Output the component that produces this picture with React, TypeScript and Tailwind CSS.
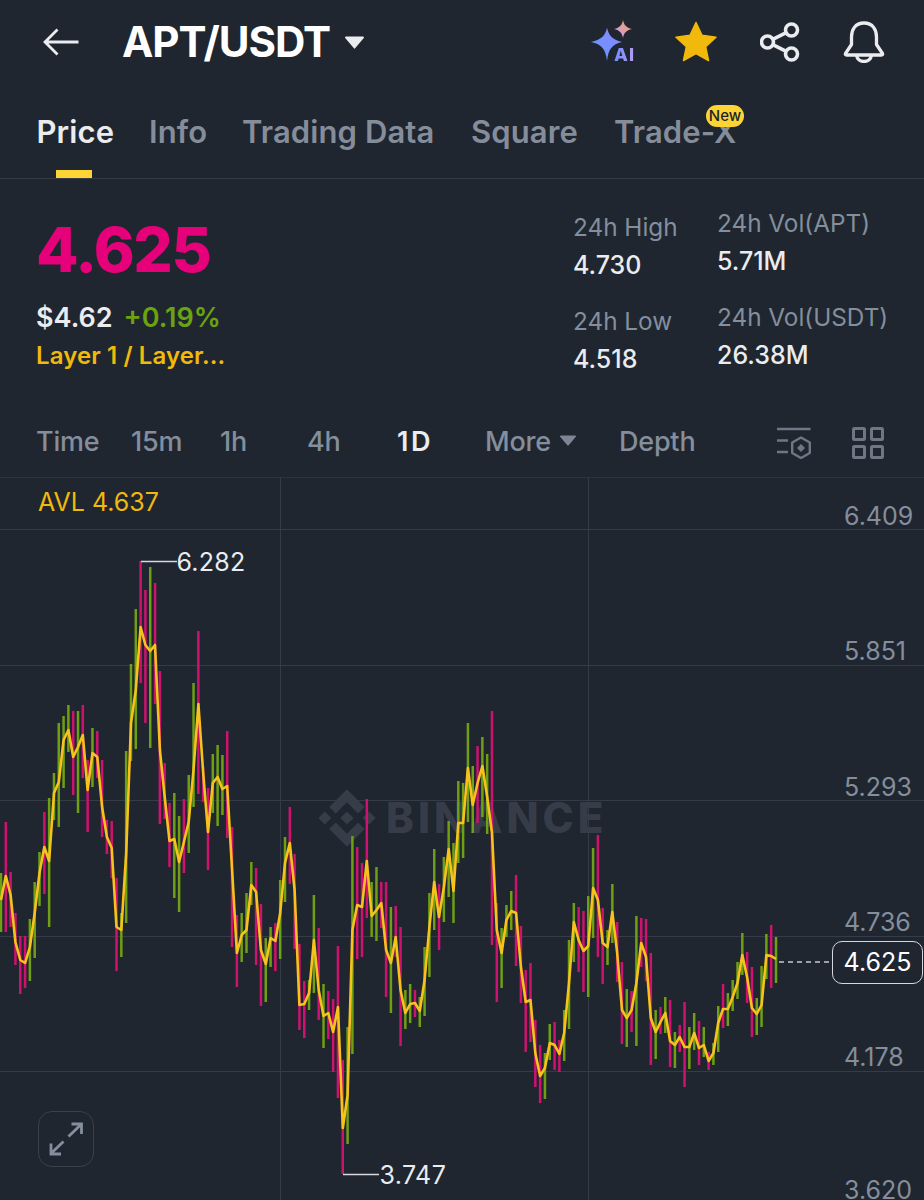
import React from "react";

type Bar = [number, number, number, number];
// colour (0 pink, 1 green), wick top, wick bottom, moving average
const bars: Bar[] = [
[1,873,932,900],[0,822,932,876],[0,872,927,895],[0,913,965,942],[0,936,994,960],[0,936,988,963],[1,919,981,947],[1,882,958,913],[1,852,906,873],[0,812,894,847],
[1,798,927,861],[1,773,820,793],[1,723,827,782],[1,716,788,740],[1,705,752,730],[0,711,795,757],[1,711,813,747],[0,705,778,735],[0,760,832,790],[1,728,787,753],
[0,731,778,757],[0,760,837,807],[0,820,854,837],[0,821,878,848],[0,878,971,927],[1,913,957,930],[1,751,923,853],[1,664,761,723],[1,609,749,690],[0,561,683,627],
[0,590,723,645],[1,567,748,651],[0,583,704,645],[0,671,824,750],[0,763,819,797],[0,803,867,841],[1,793,898,839],[1,816,912,862],[0,799,873,842],[1,775,853,822],
[1,683,807,770],[0,631,794,704],[0,767,802,773],[0,788,870,832],[1,754,813,783],[1,745,826,777],[1,755,815,789],[0,731,838,786],[0,827,947,870],[0,915,987,953],
[1,913,962,935],[1,893,953,930],[1,862,905,885],[0,868,965,892],[0,904,1006,950],[1,938,1002,964],[1,927,967,938],[0,923,971,941],[1,880,959,913],[1,837,902,863],
[0,807,884,843],[0,854,949,890],[0,944,1030,1005],[0,981,1038,1004],[1,980,1010,993],[1,895,993,940],[0,928,1020,990],[1,984,1048,1016],[0,991,1039,1013],[0,999,1072,1032],
[0,946,1098,1007],[0,1060,1174,1128],[1,1027,1144,1095],[1,836,1054,930],[0,847,959,905],[0,863,957,907],[0,799,918,861],[1,882,937,916],[1,867,941,910],[0,882,928,903],
[0,882,997,950],[1,907,1013,963],[0,906,957,937],[0,927,1046,990],[1,990,1029,1013],[1,984,1023,1004],[0,990,1017,1003],[1,997,1027,1011],[1,947,1016,980],[1,893,977,927],
[1,849,930,882],[0,884,950,917],[1,857,922,887],[1,821,897,849],[1,843,923,891],[1,781,863,823],[1,783,858,823],[1,723,822,768],[1,766,833,805],[0,746,823,783],
[1,737,817,766],[1,754,834,797],[0,711,945,833],[0,903,1002,930],[1,928,988,953],[1,905,937,920],[1,891,930,911],[0,875,966,913],[0,926,1003,967],[0,970,1052,1002],
[0,963,1042,1000],[0,1020,1087,1053],[0,1045,1103,1076],[1,1053,1099,1068],[1,1024,1060,1043],[0,1022,1070,1045],[0,1040,1072,1054],[1,1010,1061,1033],[1,940,1029,983],[1,903,962,922],
[0,907,972,940],[0,911,992,951],[1,896,997,946],[1,848,938,888],[0,835,957,900],[0,908,984,943],[1,930,965,947],[1,884,943,912],[0,922,982,952],[0,962,1044,1010],
[1,989,1047,1018],[0,991,1032,1010],[1,916,1046,983],[0,918,967,943],[0,919,981,957],[0,953,1065,1018],[1,1010,1059,1032],[0,1007,1034,1022],[1,997,1033,1013],[0,1000,1067,1041],
[1,1032,1068,1045],[0,1025,1052,1037],[0,1002,1087,1047],[1,1027,1069,1047],[1,1013,1050,1033],[0,1021,1065,1048],[1,1027,1057,1045],[0,1052,1070,1061],[1,1043,1065,1053],[1,1006,1052,1023],
[0,984,1028,1009],[1,993,1026,1009],[1,980,1011,997],[1,962,999,983],[1,933,975,955],[0,952,1003,977],[0,967,1037,1008],[1,998,1035,1014],[1,966,1027,1005],[1,934,979,955],
[0,925,988,956],[1,937,983,959],
];
const xOf = (i: number) => 1 + (i * 775) / 161;
const maPoints = bars.map((b, i) => `${xOf(i).toFixed(1)},${b[3]}`).join(" ");

const FONT = "font-['Inter','Liberation_Sans',sans-serif]";

function Caret({ className }: { className: string }) {
  return (
    <svg viewBox="0 0 20 13" className={className} fill="currentColor">
      <path d="M1.5 0.5h17a1 1 0 0 1 .8 1.6l-8.500 10a1 1 0 0 1-1.600 0l-8.500-10a1 1 0 0 1 .8-1.600z" />
    </svg>
  );
}

function AiIcon() {
  return (
    <div className="relative h-[44px] w-[46px]">
      <svg viewBox="0 0 46 44" className="h-[44px] w-[46px]">
        <defs>
          <linearGradient id="sp1" x1="0" y1="1" x2="1" y2="0">
            <stop offset="0" stopColor="#5f9bff" />
            <stop offset="1" stopColor="#8f83ff" />
          </linearGradient>
          <linearGradient id="sp2" x1="0" y1="1" x2="1" y2="0">
            <stop offset="0" stopColor="#c79aee" />
            <stop offset="1" stopColor="#f5a35f" />
          </linearGradient>
        </defs>
        <path d="M16 7.500C17.500 15 21 19.500 31 22 21 24.500 17.500 29 16 41 14.500 29 11 24.500 0 22 11 19.500 14.500 15 16 7.500Z" fill="url(#sp1)" />
        <path d="M32 0C33 5 35 7.500 41 9 35 10.500 33 13 32 18 31 13 29 10.500 23 9 29 7.500 31 5 32 0Z" fill="url(#sp2)" />
      </svg>
      <span className="absolute left-[23px] top-[25px] bg-gradient-to-r from-[#6e8cff] to-[#b79cf0] bg-clip-text text-[18px] leading-[19px] font-extrabold tracking-[1px] text-transparent">
        AI
      </span>
    </div>
  );
}

function StarIcon() {
  return (
    <svg viewBox="0 0 42 41" className="h-[41px] w-[42px]">
      <path
        d="M21 1.500 27 14.300 41 16.200 30.700 25.800 33.500 39.500 21 32.700 8.500 39.500 11.300 25.800 1 16.200 15 14.300Z"
        fill="#f0b90b"
        stroke="#f0b90b"
        strokeWidth="1.500"
        strokeLinejoin="round"
      />
    </svg>
  );
}

function ShareIcon() {
  return (
    <svg viewBox="0 0 40 40" className="h-[40px] w-[40px]" fill="none" stroke="#eaecef" strokeWidth="3.600">
      <circle cx="31.500" cy="8" r="6" />
      <circle cx="7.500" cy="20" r="6" />
      <circle cx="31.500" cy="32" r="6" />
      <path d="M12.800 17.300 26.200 10.700M12.800 22.700 26.200 29.300" />
    </svg>
  );
}

function BellIcon() {
  return (
    <svg viewBox="0 0 42 42" className="h-[42px] w-[42px]" fill="none" stroke="#eaecef" strokeWidth="3.300" strokeLinejoin="round">
      <path d="M21 2C12 2 8.500 9 8.500 16V23.500L2.500 32.500C2 33.500 2.500 34 3.500 34H38.500C39.500 34 40 33.500 39.500 32.500L33.500 23.500V16C33.500 9 30 2 21 2Z" />
      <path d="M13.500 34C14 38 17 40.500 21 40.500S28 38 28.500 34" />
    </svg>
  );
}

function SettingsIcon() {
  return (
    <svg viewBox="0 0 35 32" className="h-[32px] w-[35px]" fill="none" stroke="#6f7785" strokeWidth="2.400">
      <path d="M1 2H34.500M1 13.500H12M1 25H12" />
      <path d="M25 10.500 33.800 15.500V26L25 31 16.200 26V15.500Z" strokeLinejoin="round" />
      <path d="M25 17 29 21 25 25 21 21Z" fill="#6f7785" stroke="none" />
    </svg>
  );
}

function GridIcon() {
  return (
    <svg viewBox="0 0 32 32" className="h-[32px] w-[32px]" fill="none" stroke="#6f7785" strokeWidth="3">
      <rect x="1.500" y="1.500" width="11" height="11" rx="1" />
      <rect x="19.500" y="1.500" width="11" height="11" rx="1" />
      <rect x="1.500" y="19.500" width="11" height="11" rx="1" />
      <rect x="19.500" y="19.500" width="11" height="11" rx="1" />
    </svg>
  );
}

function Stat({ label, value }: { label: string; value: string }) {
  return (
    <div className="flex flex-col">
      <span className="text-[24.3px] leading-[30px] text-[#848e9c]">{label}</span>
      <span className="mt-[8px] text-[25px] leading-[30px] font-medium text-[#eaecef]">{value}</span>
    </div>
  );
}

export default function App() {
  return (
    <div className={`h-[1200px] w-[924px] overflow-hidden bg-[#1f2630] ${FONT}`}>
      {/* Header */}
      <header className="flex h-[82px] items-center pt-[1px]">
        <svg viewBox="0 0 36 28" className="ml-[43px] h-[28px] w-[36px]" fill="none" stroke="#eaecef" strokeWidth="2.800">
          <path d="M35.500 14H2M14.500 1.500 2 14 14.500 26.500" />
        </svg>
        <h1 className="ml-[43px] text-[42px] leading-[48px] font-bold tracking-[-1px] text-white">APT/USDT</h1>
        <Caret className="ml-[14px] mt-[1px] h-[13px] w-[21px] text-[#eaecef]" />
        <div className="ml-[226px] flex items-center">
          <AiIcon />
          <div className="ml-[38px]"><StarIcon /></div>
          <div className="ml-[43px]"><ShareIcon /></div>
          <div className="ml-[43px]"><BellIcon /></div>
        </div>
      </header>

      {/* Tabs */}
      <nav className="flex h-[97px] items-start border-b border-[#363c47] pl-[36.500px] pt-[29px] text-[31px] leading-[42px] font-semibold tracking-[0.1px] text-[#868d9a]">
        <div className="relative w-[112.500px] text-[#eaecef]">
          Price
          <span className="absolute left-[19.500px] top-[59px] h-[8px] w-[36px] bg-[#fcd535]" />
        </div>
        <div className="w-[93px]">Info</div>
        <div className="w-[229px]">Trading Data</div>
        <div className="w-[143px]">Square</div>
        <div className="relative">
          Trade-X
          <span className="absolute left-[92px] top-[-6px] flex h-[22px] w-[38px] items-center justify-center rounded-[11px] bg-[#fcd535] text-[15px] leading-[18px] font-medium tracking-normal text-[#1e2329]">
            New
          </span>
        </div>
      </nav>

      {/* Price summary */}
      <section className="flex h-[222px] pl-[36px]">
        <div className="w-[537px] pt-[33px]">
          <div className="text-[62px] leading-[76px] font-extrabold tracking-[-1.400px] text-[#e6007a]">4.625</div>
          <div className="mt-[14px] flex items-center text-[27px] leading-[32px] font-semibold">
            <span className="text-[#eaecef]">$4.62</span>
            <span className="ml-[11px] text-[#6aa30f]">+0.19%</span>
          </div>
          <div className="mt-[7px] text-[24px] leading-[30px] font-semibold tracking-[0.1px] text-[#f0b90b]">Layer 1 / Layer...</div>
        </div>
        <div className="w-[144px] pt-[33px]">
          <Stat label="24h High" value="4.730" />
          <div className="mt-[26px]"><Stat label="24h Low" value="4.518" /></div>
        </div>
        <div className="pt-[29px]">
          <Stat label="24h Vol(APT)" value="5.71M" />
          <div className="mt-[26px]"><Stat label="24h Vol(USDT)" value="26.38M" /></div>
        </div>
      </section>

      {/* Interval row */}
      <div className="flex h-[77px] items-start border-b border-[#2d333e] pl-[36px] pt-[23px] text-[27px] leading-[36px] font-medium tracking-[-0.200px] text-[#848e9c]">
        <span className="w-[95px]">Time</span>
        <span className="w-[89px]">15m</span>
        <span className="w-[87px]">1h</span>
        <span className="w-[90px]">4h</span>
        <span className="w-[88px] font-semibold tracking-[2.500px] text-[#eaecef]">1D</span>
        <span>More</span>
        <Caret className="ml-[8px] mt-[11px] h-[11px] w-[18px] text-[#7d8593]" />
        <span className="ml-[42px]">Depth</span>
        <div className="ml-[81px] mt-[3px]"><SettingsIcon /></div>
        <div className="ml-[41px] mt-[3px]"><GridIcon /></div>
      </div>

      {/* Chart */}
      <div className="relative h-[722px] w-[924px]">
        <span className="absolute left-[386px] top-[316px] text-[42px] leading-[48px] font-extrabold tracking-[4px] text-[#363d49]">BINANCE</span>
        <svg viewBox="0 478 924 722" className="relative block h-[722px] w-[924px]">
          {[529, 665, 800, 936, 1071].map((y) => (
            <line key={y} x1="0" x2="924" y1={y + 0.5} y2={y + 0.5} stroke="#363c47" strokeWidth="1" />
          ))}
          {[280, 588].map((x) => (
            <line key={x} x1={x + 0.5} x2={x + 0.5} y1="478" y2="1200" stroke="#363c47" strokeWidth="1" />
          ))}
          <g fill="#363d49" transform="translate(318 789) scale(0.46)">
            <path d="M38.730 53.200L63 28.930l24.280 24.280 14.120-14.120L63 .69 24.600 39.090l14.130 14.110zM.69 63l14.120-14.120L28.930 63 14.810 77.120zM38.730 72.800L63 97.070l24.280-24.280 14.130 14.100L63 125.310 24.600 86.910l-.02-.02zM97.070 63l14.120-14.120L125.310 63l-14.120 14.120zM77.320 63L63 48.680 52.410 59.270l-1.220 1.220-2.510 2.510L63 77.320 77.320 63z" />
          </g>
          {bars.map((b, i) => (
            <line key={i} x1={xOf(i)} x2={xOf(i)} y1={b[1]} y2={b[2]} stroke={b[0] ? "#6f9f12" : "#cf126f"} strokeWidth="2.500" />
          ))}
          <polyline points={maPoints} fill="none" stroke="#f7c21c" strokeWidth="2.600" strokeLinejoin="round" />
          <path d="M141 561.500H177M343 1174.500H379" stroke="#d5d8dd" strokeWidth="1.500" fill="none" />
          <path d="M779 962H832" stroke="#c6cad0" strokeWidth="1.300" strokeDasharray="5 4" fill="none" />
        </svg>

        <span className="absolute left-[38px] top-[9px] text-[25px] leading-[30px] text-[#f0b90b]">AVL 4.637</span>
        <span className="absolute left-[176.500px] top-[69px] text-[25px] leading-[30px] tracking-[0.200px] text-[#eaecef]">6.282</span>
        <span className="absolute left-[379.500px] top-[682px] text-[25px] leading-[30px] tracking-[0.400px] text-[#eaecef]">3.747</span>

        <span className="absolute left-[844px] top-[23px] text-[25px] leading-[30px] text-[#848e9c]">6.409</span>
        <span className="absolute left-[844px] top-[158px] text-[25px] leading-[30px] text-[#848e9c]">5.851</span>
        <span className="absolute left-[844px] top-[294px] text-[25px] leading-[30px] text-[#848e9c]">5.293</span>
        <span className="absolute left-[844px] top-[429px] text-[25px] leading-[30px] text-[#848e9c]">4.736</span>
        <span className="absolute left-[844px] top-[564px] text-[25px] leading-[30px] text-[#848e9c]">4.178</span>
        <span className="absolute left-[844px] top-[697px] text-[25px] leading-[30px] text-[#848e9c]">3.620</span>

        <div className="absolute left-[832px] top-[463px] flex h-[43px] w-[91px] items-center justify-center rounded-[10px] border border-[#d5d8dd] bg-[#1f2630] text-[25px] text-white">
          4.625
        </div>

        <div className="absolute left-[38px] top-[633px] flex h-[56px] w-[56px] items-center justify-center rounded-[14px] border-[1.500px] border-[#3a404c]">
          <svg viewBox="0 0 34 34" className="h-[34px] w-[34px]" fill="none" stroke="#848e9c" strokeWidth="2.800">
            <path d="M19.500 14.500 32 2.500M22.500 2H32.500V12M14.500 19.500 2 31.500M2 21.500V32H12" />
          </svg>
        </div>
      </div>
    </div>
  );
}
